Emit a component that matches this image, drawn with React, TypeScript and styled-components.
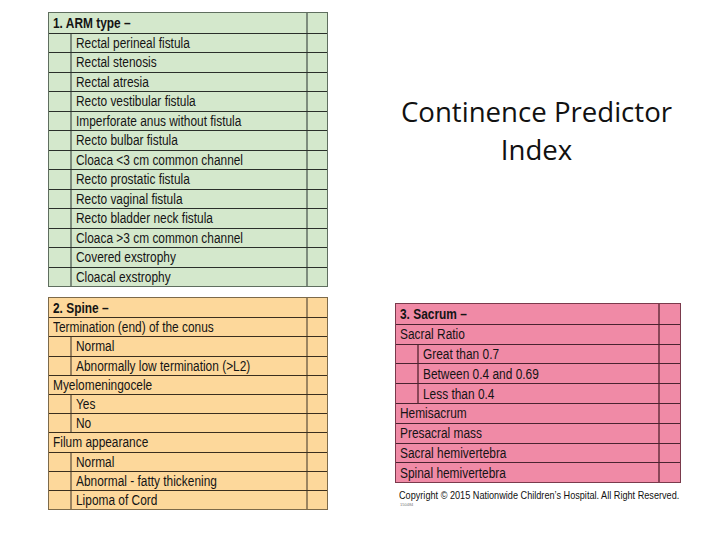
import React from "react";
import styled, { createGlobalStyle } from "styled-components";

const Global = createGlobalStyle`
  html, body { margin: 0; padding: 0; background: #ffffff; }
  body { width: 720px; height: 540px; overflow: hidden; }
`;

type Theme = { bg: string; line: string; vline: string; outer: string };

const green: Theme = { bg: "#d4e8cc", line: "#2a2f2a", vline: "#7d8c7d", outer: "#5f6e5f" };
const orange: Theme = { bg: "#fdd89b", line: "#3a2e1e", vline: "#9c8460", outer: "#7d6a4a" };
const pink: Theme = { bg: "#f08aa6", line: "#4a2330", vline: "#8a4658", outer: "#7a3a4c" };

const Page = styled.div`
  display: grid;
  grid-template-columns: 280px 286px;
  column-gap: 67px;
  padding: 12px 0 0 48px;
  font-family: "Liberation Sans", Arial, sans-serif;
`;

const LeftCol = styled.div`
  display: flex;
  flex-direction: column;
  gap: 10px;
`;

const RightCol = styled.div`
  display: flex;
  flex-direction: column;
`;

const Title = styled.h1`
  margin: 80px 0 0 0;
  padding-right: 3px;
  font-family: "Open Sans", Lato, sans-serif;
  font-weight: 400;
  font-size: 27.6px;
  line-height: 38px;
  text-align: center;
  color: #111;
`;

const Spacer = styled.div`
  height: 135px;
`;

const Table = styled.div<{ $t: Theme }>`
  display: flex;
  flex-direction: column;
  background: ${(p) => p.$t.bg};
  border: 1px solid ${(p) => p.$t.outer};
`;

const Row = styled.div<{ $t: Theme; $h: number; $check: number; $first?: boolean }>`
  display: grid;
  grid-template-columns: 23px 1fr ${(p) => p.$check}px;
  height: ${(p) => p.$h}px;
  box-sizing: border-box;
  border-top: ${(p) => (p.$first ? "none" : `1px solid ${p.$t.line}`)};
  color: #141414;
  font-size: 14px;
`;

const Indent = styled.div<{ $t: Theme }>`
  border-right: 2px solid ${(p) => p.$t.vline};
`;

const Label = styled.div<{ $span?: boolean; $bold?: boolean }>`
  grid-column: ${(p) => (p.$span ? "1 / 3" : "2 / 3")};
  display: flex;
  align-items: center;
  padding-left: 4px;
  font-weight: ${(p) => (p.$bold ? 700 : 400)};
  white-space: nowrap;
  overflow: hidden;
`;

const Narrow = styled.span`
  display: inline-block;
  transform: scaleX(0.85);
  transform-origin: left center;
`;

const Check = styled.div<{ $t: Theme }>`
  grid-column: 3 / 4;
  border-left: 2px solid ${(p) => p.$t.vline};
`;

const Copyright = styled.div`
  margin-top: 6px;
  padding-left: 4px;
  font-size: 10.75px;
  color: #111;
  white-space: nowrap;
`;

const Tiny = styled.div`
  margin-top: 1px;
  padding-left: 5px;
  font-size: 4px;
  color: #777;
`;

type Item = { text: string; indent?: boolean; bold?: boolean };

const arm: Item[] = [
  { text: "1. ARM type –", bold: true },
  { text: "Rectal perineal fistula", indent: true },
  { text: "Rectal stenosis", indent: true },
  { text: "Rectal atresia", indent: true },
  { text: "Recto vestibular fistula", indent: true },
  { text: "Imperforate anus without fistula", indent: true },
  { text: "Recto bulbar fistula", indent: true },
  { text: "Cloaca <3 cm common channel", indent: true },
  { text: "Recto prostatic fistula", indent: true },
  { text: "Recto vaginal fistula", indent: true },
  { text: "Recto bladder neck fistula", indent: true },
  { text: "Cloaca >3 cm common channel", indent: true },
  { text: "Covered exstrophy", indent: true },
  { text: "Cloacal exstrophy", indent: true },
];

const spine: Item[] = [
  { text: "2. Spine –", bold: true },
  { text: "Termination (end) of the conus" },
  { text: "Normal", indent: true },
  { text: "Abnormally low termination (>L2)", indent: true },
  { text: "Myelomeningocele" },
  { text: "Yes", indent: true },
  { text: "No", indent: true },
  { text: "Filum appearance" },
  { text: "Normal", indent: true },
  { text: "Abnormal - fatty thickening", indent: true },
  { text: "Lipoma of Cord", indent: true },
];

const sacrum: Item[] = [
  { text: "3. Sacrum –", bold: true },
  { text: "Sacral Ratio" },
  { text: "Great than 0.7", indent: true },
  { text: "Between 0.4 and 0.69", indent: true },
  { text: "Less than 0.4", indent: true },
  { text: "Hemisacrum" },
  { text: "Presacral mass" },
  { text: "Sacral hemivertebra" },
  { text: "Spinal hemivertebra" },
];

function Section({ items, theme, h, check }: { items: Item[]; theme: Theme; h: number; check: number }) {
  return (
    <Table $t={theme}>
      {items.map((it, i) => (
        <Row key={i} $t={theme} $h={h} $check={check} $first={i === 0}>
          {it.indent && <Indent $t={theme} />}
          <Label $span={!it.indent} $bold={it.bold}>
            <Narrow>{it.text}</Narrow>
          </Label>
          <Check $t={theme} />
        </Row>
      ))}
    </Table>
  );
}

export default function App() {
  return (
    <>
      <Global />
      <Page>
        <LeftCol>
          <Section items={arm} theme={green} h={19.5} check={21} />
          <Section items={spine} theme={orange} h={19.2} check={21} />
        </LeftCol>
        <RightCol>
          <Title>
            Continence Predictor
            <br />
            Index
          </Title>
          <Spacer />
          <Section items={sacrum} theme={pink} h={19.8} check={22} />
          <Copyright>
            <Narrow>Copyright © 2015 Nationwide Children’s Hospital. All Right Reserved.</Narrow>
          </Copyright>
          <Tiny>150484</Tiny>
        </RightCol>
      </Page>
    </>
  );
}
